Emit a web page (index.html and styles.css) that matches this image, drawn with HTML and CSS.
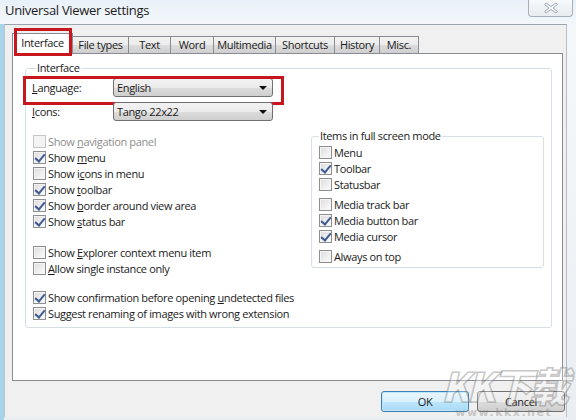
FILE: index.html
```html
<!DOCTYPE html>
<html>
<head>
<meta charset="utf-8">
<link rel="stylesheet" href="styles.css">
</head>
<body>
<div class="window">
  <div class="titlebar">
    <span class="title">Universal Viewer settings</span>
    <div class="close">
      <svg width="16" height="12" viewBox="0 0 16 12"><path d="M3 1 L8 4.5 L13 1 L14.5 2.5 L10 6 L14.5 9.5 L13 11 L8 7.5 L3 11 L1.5 9.5 L6 6 L1.5 2.5 Z" fill="#f4f6f8" stroke="#9aa3ad" stroke-width="0.9" stroke-linejoin="round"/></svg>
    </div>
  </div>
  <div class="client">
    <div class="tabs">
      <div class="tab sel w-interface"><span>Interface</span></div>
      <div class="tab w-files"><span>File types</span></div>
      <div class="tab w-text"><span>Text</span></div>
      <div class="tab w-word"><span>Word</span></div>
      <div class="tab w-mm"><span>Multimedia</span></div>
      <div class="tab w-sc"><span>Shortcuts</span></div>
      <div class="tab w-hist"><span>History</span></div>
      <div class="tab w-misc"><span>Misc.</span></div>
    </div>
    <div class="panel">
      <fieldset class="group main">
        <legend>Interface</legend>
        <div class="field lang">
          <span class="flabel"><u>L</u>anguage:</span>
          <div class="combo"><span>English</span><i class="arrow"></i></div>
        </div>
        <div class="field icons">
          <span class="flabel"><u>I</u>cons:</span>
          <div class="combo"><span>Tango 22x22</span><i class="arrow"></i></div>
        </div>
        <div class="cols">
          <div class="left">
            <div class="chk dis"><i class="box"></i><span>Show <u>n</u>avigation panel</span></div>
            <div class="chk on"><i class="box"></i><span>Show <u>m</u>enu</span></div>
            <div class="chk"><i class="box"></i><span>Show i<u>c</u>ons in menu</span></div>
            <div class="chk on"><i class="box"></i><span>Show <u>t</u>oolbar</span></div>
            <div class="chk on"><i class="box"></i><span>Show <u>b</u>order around view area</span></div>
            <div class="chk on"><i class="box"></i><span>Show <u>s</u>tatus bar</span></div>
            <div class="chk gap15"><i class="box"></i><span>Show <u>E</u>xplorer context menu item</span></div>
            <div class="chk"><i class="box"></i><span><u>A</u>llow single instance only</span></div>
            <div class="chk on gap13"><i class="box"></i><span>Show confirmation before opening <u>u</u>ndetected files</span></div>
            <div class="chk on"><i class="box"></i><span>Suggest renaming of images with wrong extension</span></div>
          </div>
          <fieldset class="group sub">
            <legend>Items in full screen mode</legend>
            <div class="chk"><i class="box"></i><span>Menu</span></div>
            <div class="chk on"><i class="box"></i><span>Toolbar</span></div>
            <div class="chk"><i class="box"></i><span>Statusbar</span></div>
            <div class="chk gap4"><i class="box"></i><span>Media track bar</span></div>
            <div class="chk on"><i class="box"></i><span>Media button bar</span></div>
            <div class="chk on"><i class="box"></i><span>Media cursor</span></div>
            <div class="chk gap4"><i class="box"></i><span>Always on top</span></div>
          </fieldset>
        </div>
      </fieldset>
    </div>
    <div class="buttons">
      <div class="btn default">OK</div>
      <div class="btn">Cancel</div>
    </div>
  </div>
  <div class="watermark">
    <span class="wm-big">KK下载</span>
    <span class="wm-small">www.kkx.net</span>
  </div>
</div>
</body>
</html>
```
FILE: styles.css
```css
* { box-sizing: border-box; }
html, body { margin: 0; padding: 0; }
body {
  width: 576px; height: 420px; overflow: hidden;
  font-family: "Open Sans", "Noto Sans", sans-serif;
  font-size: 11px;
  letter-spacing: -0.35px;
  color: #1a1a1a;
}
.window {
  position: relative;
  width: 576px; height: 420px;
  background: linear-gradient(180deg, #eef3f8 0%, #f5f8fb 30px, #eaeef2 100%);
  border-left: 4px solid #a6d5ea;
  display: flex; flex-direction: column;
}
.titlebar {
  height: 24px; flex: none;
  display: flex; align-items: flex-start; justify-content: space-between;
  background: linear-gradient(180deg, #e9f1f8, #f3f7fb);
  margin-left: -4px;
}
.title {
  font-size: 13px; line-height: 20px; padding-left: 5px; color: #1b1b1b;
  letter-spacing: -0.3px;
}
.close {
  width: 45px; height: 17px; margin-right: 3px;
  border: 1px solid #a7b0ba; border-top: none;
  border-radius: 0 0 4px 4px;
  background: linear-gradient(180deg, #f7f9fb, #e7ecf1);
  display: flex; align-items: center; justify-content: center;
}
.client {
  flex: 1;
  margin-right: 9px; margin-bottom: 3px;
  background: #f0f0f0;
  border-top: 1px solid #9aa4ad;
  border-left: 1px solid #b8c6cf;
  border-right: 1px solid #b6bec6;
  padding: 8px 1px 0 7px;
  display: flex; flex-direction: column;
}
.tabs {
  display: flex; align-items: flex-end;
  height: 21px; padding-left: 2px;
  margin-bottom: -1px;
  position: relative; z-index: 2;
}
.tab {
  height: 17px; margin-bottom: 1px;
  margin-left: -1px;
  border: 1px solid #898c95; border-bottom: none;
  background: linear-gradient(180deg, #f2f2f2 0%, #ebebeb 50%, #dddddd 51%, #cfcfcf 100%);
  display: flex; align-items: center; justify-content: center;
  line-height: 14px;
}
.tab:first-child { margin-left: 0; }
.tab.sel {
  height: 21px; margin-bottom: 0;
  margin-left: -2px; margin-right: -2px;
  background: #fff;
  position: relative; z-index: 3;
  padding-bottom: 2px;
}
.tab.sel::after {
  content: ""; position: absolute;
  left: 1px; right: 0; top: -6px; bottom: -2px;
  border: 3px solid #c8161d;
}
.tab.sel + .tab { margin-left: 1px; }
.w-interface { width: 61px; }
.w-files { width: 57px; }
.w-text { width: 43px; }
.w-word { width: 44px; }
.w-mm { width: 63px; }
.w-sc { width: 60px; }
.w-hist { width: 46px; }
.w-misc { width: 40px; }
.panel {
  height: 328px; flex: none;
  margin-right: 2px;
  background: #fff;
  border: 1px solid #898c95;
  padding: 6px 10px 0 12px;
}
fieldset.group {
  margin: 0; min-width: 0;
  border: 1px solid #d5dfe5; border-radius: 3px;
}
fieldset.group legend {
  padding: 0 1px; line-height: 16px; height: 16px;
}
fieldset.main { padding: 0 7px 5px 6px; height: 268px; }
fieldset.main legend { margin-left: 4px; }
.field {
  display: flex; align-items: center; height: 19px; position: relative;
}
.field.lang { margin-top: 2px; }
.field.icons { margin-top: 5px; }
.field.lang::after {
  content: ""; position: absolute;
  left: -9px; top: -2px; width: 255px; height: 23px;
  border: 3px solid #c8161d;
}
.flabel { width: 81px; }
.combo {
  width: 160px; height: 19px;
  border: 1px solid #707070; border-radius: 3px;
  background: linear-gradient(180deg, #f2f2f2 0%, #ebebeb 50%, #dddddd 51%, #cfcfcf 100%);
  display: flex; align-items: center; justify-content: space-between;
  padding: 0 4px 0 3px;
}
.arrow {
  width: 0; height: 0;
  border-left: 4px solid transparent; border-right: 4px solid transparent;
  border-top: 4px solid #111;
  margin-right: 1px;
}
.cols {
  margin-top: 7px;
  display: grid; grid-template-columns: 1fr 233px;
  align-items: start;
}
.left { padding-top: 5px; padding-left: 1px; }
.chk { display: flex; align-items: center; height: 16px; white-space: nowrap; }
.chk .box {
  width: 13px; height: 13px; flex: none; margin-right: 2px;
  border: 1px solid #8e8f8f;
  background: linear-gradient(135deg, #dcdcdc, #fdfdfd);
  box-shadow: inset 0 0 0 1px #f4f4f4;
  position: relative;
}
.chk.on .box::after {
  content: ""; position: absolute;
  left: 3px; top: 0px; width: 4px; height: 8px;
  border-right: 2px solid #3e5b94; border-bottom: 2px solid #3e5b94;
  transform: rotate(40deg);
}
.chk.dis { color: #8d8d8d; }
.chk.dis .box { border-color: #c4c4c4; background: #f4f4f4; box-shadow: none; }
.gap15 { margin-top: 15px; }
.gap13 { margin-top: 13px; }
.gap4 { margin-top: 4px; }
fieldset.sub { padding: 0 7px 3px 7px; margin-right: 0; }
fieldset.sub legend { margin-left: 0px; }
.buttons {
  display: flex; justify-content: flex-end; gap: 8px;
  margin-top: 10px;
}
.btn {
  width: 88px; height: 21px;
  border: 1px solid #707070; border-radius: 3px;
  background: linear-gradient(180deg, #f2f2f2 0%, #ebebeb 50%, #dddddd 51%, #cfcfcf 100%);
  display: flex; align-items: center; justify-content: center;
}
.btn.default {
  border-color: #3c7fb1;
  background: linear-gradient(180deg, #eaf6fd 0%, #d9f0fc 50%, #bee6fd 51%, #a7d9f5 100%);
  box-shadow: inset 0 0 0 1px #bfe7fb;
}
.watermark {
  position: absolute; right: 10px; bottom: 1px;
  display: flex; flex-direction: column; align-items: center;
  pointer-events: none;
}
.wm-big {
  font-family: "Noto Sans CJK SC", sans-serif; font-weight: 900;
  font-size: 40px; line-height: 44px; font-style: italic;
  color: rgba(255,255,255,0.3);
  -webkit-text-stroke: 1.5px rgba(110,110,110,0.4);
  letter-spacing: -3px;
}
.wm-small {
  font-family: "DejaVu Sans", sans-serif; font-weight: bold;
  font-size: 11px; line-height: 12px; letter-spacing: 1.5px;
  color: rgba(130,130,130,0.4);
}
```
